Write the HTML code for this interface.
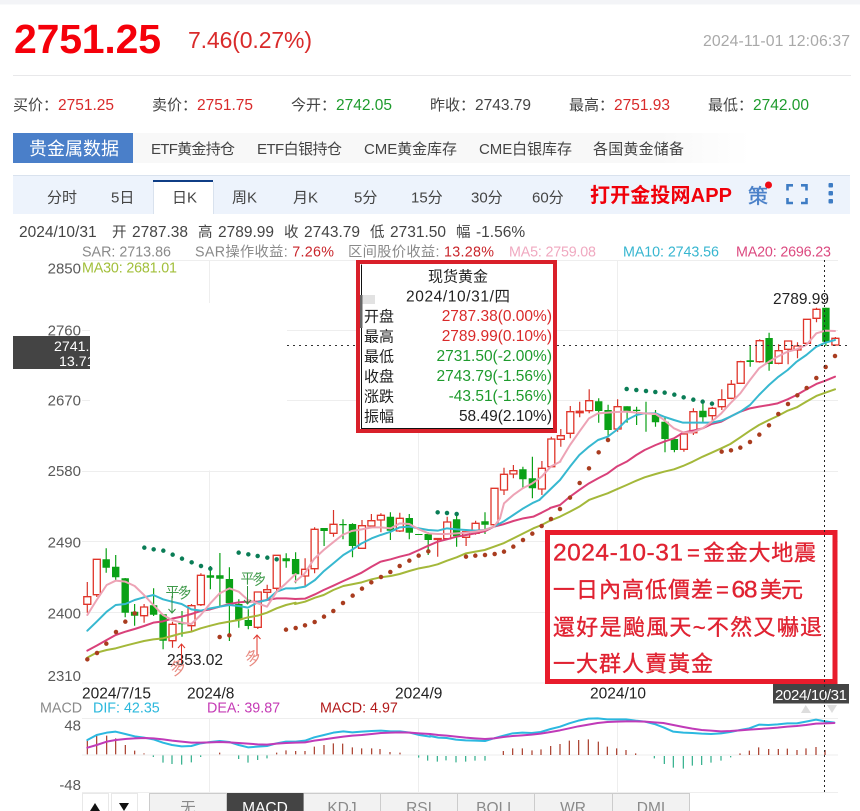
<!DOCTYPE html>
<html lang="zh"><head><meta charset="utf-8"><title>现货黄金</title>
<style>
html,body{margin:0;padding:0;background:#fff;width:860px;height:811px;overflow:hidden}
svg{display:block;font-family:"Liberation Sans","Noto Sans CJK SC",sans-serif}
.s{font-size:15px;fill:#444}.n{font-size:15.5px}
.r{fill:#d92a2a}.g{fill:#1e9b2d}
.tb{font-size:15px;fill:#444}
.ax{font-size:15px;fill:#5a5a5a;text-anchor:end}
.lg{font-size:14.3px}
.tip{font-size:15.5px;text-anchor:end}
.an{font-size:22px;fill:#e02231;stroke:#e02231;stroke-width:.35;font-family:"Liberation Sans","Noto Sans CJK TC",sans-serif}
.bt{font-size:15.5px;fill:#8a8a8a;text-anchor:middle}
.ln{fill:none;stroke-width:6;stroke-linejoin:round;stroke-linecap:round}
.dot{fill:none;stroke-width:13.5;stroke-linecap:round}
</style></head><body>
<svg width="860" height="811" viewBox="0 0 860 811" xmlns="http://www.w3.org/2000/svg">
<rect width="860" height="811" fill="#fff"/>
<rect width="860" height="4.5" fill="#f3f4f7"/>
<text x="14" y="53" font-size="41" font-weight="700" fill="#f5000a" textLength="147">2751.25</text>
<text x="188" y="48" font-size="23" fill="#d92a2a" textLength="124">7.46(0.27%)</text>
<text x="703" y="46" font-size="15.8" fill="#a9a9a9" textLength="147">2024-11-01 12:06:37</text>
<rect x="13" y="75" width="838" height="1" fill="#e8e8ea"/>

<text x="13" y="110" class="s">买价：</text><text x="58" y="110" class="n r">2751.25</text>
<text x="152" y="110" class="s">卖价：</text><text x="197" y="110" class="n r">2751.75</text>
<text x="291" y="110" class="s">今开：</text><text x="336" y="110" class="n g">2742.05</text>
<text x="430" y="110" class="s">昨收：</text><text x="475" y="110" class="n" fill="#444">2743.79</text>
<text x="569" y="110" class="s">最高：</text><text x="614" y="110" class="n r">2751.93</text>
<text x="708" y="110" class="s">最低：</text><text x="753" y="110" class="n g">2742.00</text>

<defs><linearGradient id="fd" x1="0" x2="1" y1="0" y2="0"><stop offset=".85" stop-color="#f8f8f8"/><stop offset="1" stop-color="#fff"/></linearGradient></defs>
<rect x="133" y="133" width="617" height="30" fill="url(#fd)"/>
<rect x="13" y="133" width="120" height="30" fill="#4a7fc9"/>
<text x="29" y="155" font-size="18" fill="#fff">贵金属数据</text>
<text x="151" y="154" class="tb" textLength="84">ETF黄金持仓</text>
<text x="257" y="154" class="tb" textLength="85">ETF白银持仓</text>
<text x="364" y="154" class="tb" textLength="93">CME黄金库存</text>
<text x="479" y="154" class="tb" textLength="93">CME白银库存</text>
<text x="593" y="154" class="tb" textLength="91">各国黄金储备</text>

<rect x="13" y="175" width="837" height="39" fill="#edf3fc"/>
<rect x="13" y="175" width="837" height="1" fill="#d9e2ee"/>
<rect x="153" y="180" width="60" height="34" fill="#fff"/>
<rect x="153" y="180" width="60" height="2" fill="#0f3e86"/>
<rect x="153" y="182" width="1" height="32" fill="#d9e2ee"/><rect x="213" y="182" width="1" height="32" fill="#d9e2ee"/>
<text x="47" y="202.7" class="tb">分时</text>
<text x="111" y="202.7" class="tb">5日</text>
<text x="172" y="202.7" class="tb">日K</text>
<text x="232" y="202.7" class="tb">周K</text>
<text x="293" y="202.7" class="tb">月K</text>
<text x="354" y="202.7" class="tb">5分</text>
<text x="411" y="202.7" class="tb">15分</text>
<text x="471" y="202.7" class="tb">30分</text>
<text x="532" y="202.7" class="tb">60分</text>
<text x="590" y="202" font-size="20" font-weight="700" fill="#f0000a" textLength="142">打开金投网APP</text>
<text x="748" y="203" font-size="20" fill="#4a80c8" stroke="#4a80c8" stroke-width=".4">策</text>
<circle cx="768.5" cy="185" r="3.5" fill="#f00a14"/>
<path d="M793 185.3H787.5V190.5M801 185.3H806.5V190.5M793 203H787.5V198M801 203H806.5V198" fill="none" stroke="#3e7cc4" stroke-width="2.6"/>
<g fill="#3e7cc4"><rect x="828.5" y="183" width="4.5" height="4.5" rx="1"/><rect x="828.5" y="191" width="4.5" height="4.5" rx="1"/><rect x="828.5" y="199" width="4.5" height="4.5" rx="1"/></g>

<g font-size="15.5" fill="#444">
<text x="19" y="237">2024/10/31</text><text x="112" y="237" font-size="14.5">开</text><text x="132" y="237">2787.38</text>
<text x="198" y="237" font-size="14.5">高</text><text x="218" y="237">2789.99</text>
<text x="284" y="237" font-size="14.5">收</text><text x="304" y="237">2743.79</text>
<text x="370" y="237" font-size="14.5">低</text><text x="390" y="237">2731.50</text>
<text x="456" y="237" font-size="14.5">幅</text><text x="476" y="237">-1.56%</text>
</g>

<!-- grid -->
<g stroke="#eeeeee" stroke-width="1" fill="none">
<path d="M82 260.5H838M82 330.5H838M82 400.5H838M82 471.5H838M82 541.5H838M82 612.5H838M82 683H838"/>
<path d="M209.5 260V683M418.5 260V683M617.5 260V683"/>
<path d="M82 718.5H838M82 755H838M82 792.5H838M209.5 718V792M418.5 718V792M617.5 718V792"/>
</g>
<rect x="90" y="303" width="197" height="167.5" fill="#fff"/>

<!-- wicks -->
<path fill="none" stroke="#0aa116" stroke-width="1.2" d="M106.2 548.3V572.7M115.7 555V580M125.2 578V617.3M134.6 604V625.7M153.6 588.3V616M163.1 614V649.3M182 611V636.7M210.4 566V589.3M219.9 553V606.7M229.4 567.3V641M238.8 599.3V627.7M248.3 609.3V629.3M286.2 553.3V567.7M295.6 552.3V583.3M324.1 528V546M343 519.3V539.3M352.5 523.3V557.3M390.4 512.3V540M409.3 514V539.3M428.2 532.3V555M456.6 512.7V546.7M485 512.3V534M522.9 466.7V488.3M532.4 456.7V498.3M598.7 398.3V422.7M608.1 404.7V436.7M627.1 406.3V422.7M636.6 406.7V425M646 401.7V431.7M655.5 410V426.7M665 416.7V452.3M674.4 439V452.3M702.9 400V421.7M750.2 345.7V366.7M769.1 332.7V370.7M825.9 307.7V346"/>
<path fill="none" stroke="#d8342a" stroke-width="1.2" d="M87.3 582V612.7M96.8 559V597M144.1 604V622.7M172.5 621.7V647.7M191.5 604V631.7M200.9 573.3V606M257.8 592V629M267.2 584.7V599.3M276.7 555V591M305.1 558.3V586.7M314.6 527.3V573.3M333.5 510V536.7M362 520V549M371.4 514V528.3M380.9 513.3V532.3M399.8 512.7V532M437.7 538.3V556.7M447.2 516.7V539.3M466.1 529.3V546M475.6 520.7V534.7M494.5 488V526M504 467.7V495M513.4 465V478.3M541.9 461V495M551.3 436.7V467.3M560.8 429V446.7M570.3 406V438.3M579.7 401.7V417.3M589.2 389.3V413.3M617.6 399.3V431.7M683.9 432.7V451.7M693.4 408.3V435M712.3 406.7V424M721.8 389.3V410M731.3 380V399.3M740.7 360.7V384M759.7 339.3V362.7M778.6 344.3V364.3M788.1 341V364.3M797.5 342.3V358.3M807 319.3V345M816.5 307.7V322.3M835.4 337V346"/>
<!-- green bodies -->
<path fill="#0aa116" d="M102.5 559.3h7.4V567.7h-7.4ZM112 566.7h7.4V577.3h-7.4ZM121.5 578.3h7.4V612.7h-7.4ZM130.9 611.7h7.4V615.7h-7.4ZM149.9 605.3h7.4V614.7h-7.4ZM159.4 614.3h7.4V640.7h-7.4ZM178.3 622.7h7.4V624.3h-7.4ZM206.7 575.3h7.4V577.7h-7.4ZM216.2 575.3h7.4V578.7h-7.4ZM225.7 579h7.4V603.3h-7.4ZM235.1 604h7.4V619.7h-7.4ZM244.6 620h7.4V626h-7.4ZM282.5 558.3h7.4V561.3h-7.4ZM291.9 559h7.4V574.3h-7.4ZM320.4 528h7.4V531h-7.4ZM339.3 524h7.4V525.2h-7.4ZM348.8 524h7.4V546h-7.4ZM386.7 516.7h7.4V530.7h-7.4ZM405.6 518h7.4V532.7h-7.4ZM415.1 534h7.4V535h-7.4ZM424.5 534h7.4V540h-7.4ZM452.9 519.3h7.4V536.3h-7.4ZM481.3 521.3h7.4V524.7h-7.4ZM519.2 469.3h7.4V479.3h-7.4ZM528.7 478.3h7.4V488.3h-7.4ZM595 401.3h7.4V411h-7.4ZM604.4 410h7.4V430h-7.4ZM623.4 406.3h7.4V411h-7.4ZM632.9 409.7h7.4V411h-7.4ZM642.3 413h7.4V414h-7.4ZM651.8 415h7.4V422.3h-7.4ZM661.3 421.7h7.4V439h-7.4ZM670.7 439h7.4V450h-7.4ZM699.2 410.7h7.4V417.3h-7.4ZM746.5 360.3h7.4V362h-7.4ZM765.4 338h7.4V364h-7.4ZM822.2 307.7h7.4V341.7h-7.4Z"/>
<!-- red bodies -->
<path fill="#fff" stroke="#e0352a" stroke-width="1.3" d="M83.8 596.7h7V604.3h-7ZM93.3 559.3h7V594.7h-7ZM140.6 607h7V615.7h-7ZM169 624.3h7V640.7h-7ZM188 605.7h7V625.7h-7ZM197.4 575.3h7V604.7h-7ZM254.3 592h7V627.3h-7ZM263.7 589.7h7V592.3h-7ZM273.2 555.3h7V588.3h-7ZM301.6 569.3h7V576h-7ZM311.1 529.3h7V568.7h-7ZM330 524.3h7V533.3h-7ZM358.5 525.7h7V548.3h-7ZM367.9 520.7h7V526h-7ZM377.4 515.3h7V520h-7ZM396.3 518.3h7V531h-7ZM434.2 538.5h7V539.5h-7ZM443.7 522h7V538.7h-7ZM462.6 531.7h7V537.3h-7ZM472.1 523.3h7V533.3h-7ZM491 488.3h7V524.7h-7ZM500.5 474.3h7V490h-7ZM509.9 470.7h7V474h-7ZM538.4 468.3h7V489h-7ZM547.8 439h7V466.7h-7ZM557.3 435.7h7V439.3h-7ZM566.8 411.7h7V433.3h-7ZM576.2 411.3h7V412.7h-7ZM585.7 400.7h7V410.7h-7ZM614.1 406.7h7V429h-7ZM680.4 434h7V449.3h-7ZM689.9 411.7h7V432.7h-7ZM708.8 408.3h7V415.7h-7ZM718.3 399.7h7V406.7h-7ZM727.8 384.3h7V398.3h-7ZM737.2 361.7h7V383.3h-7ZM756.2 340.7h7V361.7h-7ZM775.1 350.7h7V363.3h-7ZM784.6 341h7V349.3h-7ZM794 346h7V350h-7ZM803.5 319.3h7V343.3h-7ZM813 309.3h7V318.3h-7ZM831.9 338.3h7V345h-7Z"/>

<!-- MA lines: zoom 4 segment -->
<g transform="translate(0,480) scale(.33333)">
<polyline class="ln" stroke="#d9417a" points="262,512 290,497 320,480 347,465 376,455 404,447 432,438 460,428 489,424 516,416 545,410 574,402 602,393 631,388 659,380 688,372 716,367 744,365 773,365 801,360 830,355 858,355 887,357"/>
<polyline class="ln" stroke="#a4b83a" points="262,533 290,518 320,510 347,505 376,497 404,490 432,483 460,478 489,475 516,468 545,460 574,455 602,445 631,437 659,430 688,425 716,420 744,412 773,407 801,398 830,385 858,375 887,368"/>
<polyline class="ln" stroke="#37b8d0" points="262,452 290,425 320,395 347,375 376,372 404,360 432,352 460,345 489,358 516,365 545,372 574,388 602,392 631,385 659,380 688,375 716,378 744,383 773,367 801,360 830,335 858,325 887,325"/>
<polyline class="ln" stroke="#eda3b5" points="262,405 290,360 320,315 347,302 376,305 404,318 432,345 460,375 489,405 516,420 545,428 574,432 602,405 631,370 659,340 688,325 716,335 744,360 773,370 801,380 830,335 858,310 887,282"/>
<path class="dot" stroke="#a93c1f" d="M262 538h0M291 519h0M319 491h0M348 456h0M376 425h0M404 400h0M659 471h0M688 466h0M858 449h0"/>
<path class="dot" stroke="#0a7d56" d="M433 203h0M461 208h0M490 212h0M518 224h0M546 236h0M575 247h0M603 258h0M631 266h0M716 218h0M745 223h0M773 228h0M802 233h0M830 238h0"/>
</g>
<!-- zoom 7 segment -->
<g transform="translate(280,500) scale(.33333)">
<polyline class="ln" stroke="#d9417a" points="45,297 75,296 105,283 131,270 160,257 190,243 215,232 245,218 275,200 302,185 332,178 359,170 388,163 417,150 445,137 473,125 501,118 530,110 558,105 586,100 614,94 642,80 670,73 700,63 730,55 760,50 785,38 810,25"/>
<polyline class="ln" stroke="#a4b83a" points="45,312 75,305 105,293 131,285 160,270 190,258 215,253 245,247 275,238 302,232 332,228 359,222 388,213 417,205 445,200 473,193 501,182 530,172 558,160 586,155 614,150 642,140 670,130 700,115 730,100 760,85 785,75 810,62"/>
<polyline class="ln" stroke="#37b8d0" points="45,265 75,260 105,240 130,215 160,190 190,165 215,150 245,130 275,115 302,105 332,95 359,82 388,80 417,85 445,90 473,92 501,85 530,88 558,90 586,92 614,90 642,80 670,65 700,45 730,25 760,8 778,0"/>
<polyline class="ln" stroke="#eda3b5" points="45,245 73,222 102,177 131,150 158,128 187,105 215,93 245,88 275,82 302,82 332,85 359,70 388,72 417,88 445,100 473,102 501,102 530,100 558,98 586,95 614,90 642,80 660,55"/>
<path class="dot" stroke="#a93c1f" d="M47 384h0M75 376h0M104 366h0M132 350h0M160 333h0M189 309h0M218 287h0M246 266h0M274 247h0M303 231h0M331 216h0M359 198h0M388 182h0M416 167h0M445 154h0M558 170h0M586 167h0M615 165h0M644 162h0M672 155h0M700 140h0M729 120h0M757 101h0M785 78h0"/>
<path class="dot" stroke="#0a7d56" d="M473 37h0M501 39h0M530 42h0"/>
</g>
<!-- zoom 5 piece of MA5 -->
<g transform="translate(280,240) scale(.33333)">
<polyline class="ln" stroke="#eda3b5" points="660,835 672,790 700,765 728,745 757,730 785,710 812,680 841,665"/>
</g>
<!-- zoom 6 segment -->
<g transform="translate(560,240) scale(.33333)">
<polyline class="ln" stroke="#d9417a" points="-30,804 0,795 30,770 58,750 87,730 114,715 143,700 170,680 200,665 229,645 254,630 287,615 312,605 342,595 369,578 398,572 428,565 455,552 484,545 511,530 541,515 570,505 597,500 627,495 653,490 683,478 710,465 739,448 769,432 796,422 825,410"/>
<polyline class="ln" stroke="#a4b83a" points="-30,842 0,830 30,815 58,800 87,780 114,770 143,760 170,748 200,735 229,722 254,712 287,702 312,695 342,688 369,678 398,665 428,650 455,638 484,625 511,612 541,592 570,572 597,555 627,540 653,528 683,512 710,502 739,485 769,468 796,458 825,448"/>
<polyline class="ln" stroke="#37b8d0" points="-62,780 0,720 30,680 58,645 87,620 114,600 143,590 170,570 200,540 229,525 254,520 287,520 312,530 342,540 369,548 398,548 428,548 455,548 484,542 511,530 541,515 570,495 597,465 627,435 653,412 683,390 710,365 739,345 769,320 796,308 825,300"/>
<polyline class="ln" stroke="#eda3b5" points="0,665 30,615 58,575 87,535 114,520 143,518 170,516 200,515 229,518 254,520 287,522 312,540 342,565 369,577 398,577 428,565 455,545 484,520 511,490 541,460 570,420 597,385 627,365 653,350 683,335 710,328 739,315 769,280 796,272 825,273"/>
<path class="dot" stroke="#a93c1f" d="M-27 837h0M0 807h0M30 773h0M59 729h0M87 685h0M116 637h0M144 600h0M485 635h0M513 631h0M541 623h0M570 606h0M598 584h0M627 556h0M655 522h0M684 492h0M712 466h0M740 444h0M769 414h0M797 381h0M825 348h0"/>
<path class="dot" stroke="#0a7d56" d="M200 447h0M229 450h0M258 453h0M286 456h0M314 458h0M343 464h0M371 472h0M400 479h0M428 485h0M456 491h0"/>
</g>

<!-- horizontal crosshair -->
<path d="M287 345.5H850" stroke="#333" stroke-width="1" stroke-dasharray="2 4" fill="none"/>

<!-- y axis -->
<text x="81" y="273.3" class="ax">2850</text>
<text x="81" y="335.7" class="ax">2760</text>
<text x="81" y="405.7" class="ax">2670</text>
<text x="81" y="476" class="ax">2580</text>
<text x="81" y="547.7" class="ax">2490</text>
<text x="81" y="618.3" class="ax">2400</text>
<text x="81" y="681" class="ax">2310</text>
<rect x="13" y="336" width="77" height="33" fill="#444"/>
<svg x="13" y="336" width="77" height="33"><text x="41" y="15" font-size="14.2" fill="#fff">2741.25</text><text x="46" y="30" font-size="14.2" fill="#fff">13.71</text></svg>

<!-- legend -->
<text x="82" y="256.7" class="lg" fill="#8a8a8a" textLength="89">SAR: 2713.86</text>
<text x="195" y="256.7" class="lg" fill="#8a8a8a" textLength="139">SAR操作收益: <tspan fill="#c9242a">7.26%</tspan></text>
<text x="348" y="256.7" class="lg" fill="#8a8a8a" textLength="146">区间股价收益: <tspan fill="#c9242a">13.28%</tspan></text>
<text x="509" y="256.7" class="lg" fill="#f0a9c0" textLength="87">MA5: 2759.08</text>
<text x="623" y="256.7" class="lg" fill="#37b6d0" textLength="96">MA10: 2743.56</text>
<text x="736" y="256.7" class="lg" fill="#dc4a80" textLength="95">MA20: 2696.23</text>
<text x="82" y="272.3" class="lg" fill="#a2bf3a" textLength="95">MA30: 2681.01</text>

<!-- chart annotations -->
<text x="773" y="304" font-size="15.5" fill="#222">2789.99</text>
<text x="167" y="665" font-size="15.5" fill="#222">2353.02</text>
<g fill="#3f9a4a" font-size="14">
<text x="165.5" y="597">平</text><text transform="translate(179.5,599) rotate(-18)">多</text>
<text x="240.5" y="583.5">平</text><text transform="translate(254,585.5) rotate(-18)">多</text>
</g>
<path d="M172 596V613M168.5 609L172 613L175.5 609M247.5 586V604M244 600L247.5 604L251 600" fill="none" stroke="#2f8f3c" stroke-width="1"/>
<path d="M181.5 663V644M178 648L181.5 644L185 648M257 655V635M253.5 639L257 635L260.5 639" fill="none" stroke="#e0352a" stroke-width="1"/>
<g fill="#e88a80" font-size="16">
<text transform="translate(173,676) rotate(-25)">多</text>
<text transform="translate(248,666) rotate(-25)">多</text>
</g>

<text x="82" y="698.3" font-size="15.5" fill="#222">2024/7/15</text>
<text x="187" y="698.3" font-size="15.5" fill="#222">2024/8</text>
<text x="395" y="698.3" font-size="15.5" fill="#222">2024/9</text>
<text x="590" y="698.3" font-size="15.5" fill="#222">2024/10</text>
<rect x="773" y="684" width="76" height="19.5" fill="#444"/>
<text x="775" y="700" font-size="15" fill="#fff" textLength="72">2024/10/31</text>

<!-- tooltip -->
<rect x="358" y="262" width="197" height="169" fill="#fff" stroke="#d9202a" stroke-width="4"/>
<path d="M361.5 264.5V428.5H553" fill="none" stroke="#111" stroke-width="1"/>
<rect x="362" y="295" width="13" height="9" fill="#e2e2e2"/>
<rect x="360" y="295" width="2.5" height="33" fill="#666"/>
<text x="458" y="281.5" font-size="15" fill="#222" text-anchor="middle">现货黄金</text>
<text x="406" y="301.7" font-size="15.5" fill="#222" textLength="104">2024/10/31/四</text>
<g font-size="15" fill="#222">
<text x="364" y="321.5">开盘</text><text x="364" y="341.5">最高</text><text x="364" y="361.5">最低</text><text x="364" y="381.5">收盘</text><text x="364" y="401.5">涨跌</text><text x="364" y="421.5">振幅</text>
</g>
<text x="552" y="321" class="tip" fill="#d92a2a">2787.38(0.00%)</text>
<text x="552" y="341" class="tip" fill="#d92a2a">2789.99(0.10%)</text>
<text x="552" y="361" class="tip" fill="#1e9b2d">2731.50(-2.00%)</text>
<text x="552" y="381" class="tip" fill="#1e9b2d">2743.79(-1.56%)</text>
<text x="552" y="401" class="tip" fill="#1e9b2d">-43.51(-1.56%)</text>
<text x="552" y="421" class="tip" fill="#222">58.49(2.10%)</text>

<!-- annotation box -->
<rect x="547.5" y="532.5" width="287.5" height="149" fill="#fff" stroke="#e81c2c" stroke-width="5"/>
<text x="553" y="560.7" class="an" style="font-size:24.5px" textLength="130">2024-10-31</text>
<text x="687" y="560.7" class="an" textLength="13">=</text>
<text x="703" y="560.7" class="an" textLength="113">金金大地震</text>
<text x="553" y="597.7" class="an" textLength="160">一日內高低價差</text>
<text x="716" y="597.7" class="an" textLength="13">=</text>
<text x="731.5" y="597.7" class="an" style="font-size:24.5px" textLength="26">68</text>
<text x="760" y="597.7" class="an" textLength="43">美元</text>
<text x="553" y="635" class="an" textLength="269">還好是颱風天~不然又嚇退</text>
<text x="553" y="671.7" class="an" textLength="160">一大群人賣黃金</text>

<!-- MACD -->
<text x="40" y="712.7" class="lg" fill="#8a8a8a">MACD</text>
<text x="93" y="712.7" class="lg" fill="#2bb8dc">DIF: 42.35</text>
<text x="207" y="712.7" class="lg" fill="#c53bb5">DEA: 39.87</text>
<text x="320" y="712.7" class="lg" fill="#b21a1a">MACD: 4.97</text>
<text x="81" y="730.7" class="ax">48</text>
<text x="81" y="790" class="ax">-48</text>
<path d="M805.7 705L801 713H811ZM827 705H837L832 713Z" fill="#dddddd"/>

<g transform="translate(0,690) scale(.33333)">
<path fill="none" stroke-width="3.6" stroke="#a93c2a" d="M262 193V152M290 193V138M320 193V137M347 193V145M376 193V165M404 193V182M432 193V190M659 193V188M830 193V188M858 193V181M887 193V183M915 193V183M943 193V170M972 193V165M1000 193V160M1028 193V161M1057 193V172M1085 193V175M1115 193V175M1140 193V177M1170 193V186M1200 193V188"/>
<path fill="none" stroke-width="3.6" stroke="#2fae8a" d="M460 196V201M489 196V218M516 196V222M545 196V224M574 196V217M602 196V201M716 196V207M744 196V218M773 196V210M801 196V205M1256 196V203M1283 196V212"/>
<polyline class="ln" stroke="#2bb8e0" points="262,150 290,135 320,128 347,125 376,132 404,139 432,143 460,148 489,158 516,165 545,169 574,168 602,160 631,156 659,153 688,156 716,165 744,172 773,170 801,168 830,160 858,155 887,155 915,152 943,142 972,135 1000,128 1030,124 1057,127 1085,125 1115,123 1143,122 1172,124 1200,124 1230,128 1258,135 1290,140"/>
<polyline class="ln" stroke="#c03ab8" points="262,173 290,165 320,155 347,150 376,147 404,145 432,144 460,145 489,148 516,152 545,155 574,158 602,158 631,157 659,156 688,157 716,159 744,161 773,163 801,164 830,161 858,159 887,158 915,157 943,152 972,148 1000,144 1030,140 1057,137 1085,135 1115,132 1143,129 1172,128 1200,127 1230,128 1258,130 1290,132"/>
</g>
<g transform="translate(430,670) scale(.33333)">
<path fill="none" stroke-width="3.6" stroke="#a93c2a" d="M220 255V243M248 255V235M277 255V235M306 255V241M333 255V238M362 255V228M390 255V222M418 255V212M446 255V210M475 255V208M505 255V215M532 255V230M560 255V235M588 255V240M617 255V250M930 255V250M958 255V242M986 255V232M1016 255V237M1045 255V237M1072 255V236M1101 255V240M1128 255V235M1158 255V231M1185 255V240"/>
<path fill="none" stroke-width="3.6" stroke="#2fae8a" d="M22 258V275M48 258V271M78 258V277M107 258V275M135 258V272M165 258V272M673 258V265M703 258V282M730 258V293M760 258V296M787 258V287M815 258V285M843 258V278M873 258V272M902 258V262"/>
<polyline class="ln" stroke="#2bb8e0" points="0,198 25,203 50,204 78,209 107,211 135,212 165,213 192,205 220,197 248,190 277,188 305,189 332,186 362,177 390,170 418,160 445,152 475,146 503,145 532,148 560,148 588,148 617,152 645,155 673,162 700,172 730,185 760,188 787,189 815,191 843,192 873,190 901,186 930,180 958,175 987,164 1015,165 1043,163 1072,160 1100,160 1128,155 1158,149 1185,154 1213,158"/>
<polyline class="ln" stroke="#c03ab8" points="0,192 25,195 50,197 78,200 107,203 135,205 165,207 192,205 220,201 248,198 277,196 305,194 332,191 362,186 390,181 418,175 445,169 475,164 503,159 532,156 560,155 588,154 617,154 645,155 673,157 700,159 730,165 760,171 787,176 815,180 843,182 873,184 901,183 930,181 958,179 987,177 1015,175 1043,173 1072,170 1100,168 1128,165 1158,161 1185,160 1213,159"/>
</g>

<!-- vertical crosshair -->
<path d="M824.5 260V795" stroke="#222" stroke-width="1" stroke-dasharray="2 3" fill="none"/>

<!-- bottom controls -->
<rect x="82.5" y="793.5" width="26" height="30" fill="#fff" stroke="#e8e8e8"/>
<rect x="111.5" y="793.5" width="26" height="30" fill="#fff" stroke="#e8e8e8"/>
<path d="M95 803L90 811H100ZM119 803H129L124 811Z" fill="#111"/>
<g stroke="#cccccc" fill="#f2f2f2">
<rect x="149.5" y="793.5" width="77" height="30"/><rect x="303.5" y="793.5" width="77" height="30"/><rect x="380.5" y="793.5" width="77" height="30"/><rect x="457.5" y="793.5" width="77" height="30"/><rect x="534.5" y="793.5" width="78" height="30"/><rect x="612.5" y="793.5" width="77" height="30"/>
</g>
<rect x="227" y="793" width="76.5" height="18" fill="#444"/>
<text x="188" y="813" class="bt">无</text>
<text x="265" y="813" class="bt" style="fill:#fff">MACD</text>
<text x="342" y="813" class="bt">KDJ</text>
<text x="419" y="813" class="bt">RSI</text>
<text x="496" y="813" class="bt">BOLL</text>
<text x="573" y="813" class="bt">WR</text>
<text x="651" y="813" class="bt">DMI</text>
</svg>
</body></html>
